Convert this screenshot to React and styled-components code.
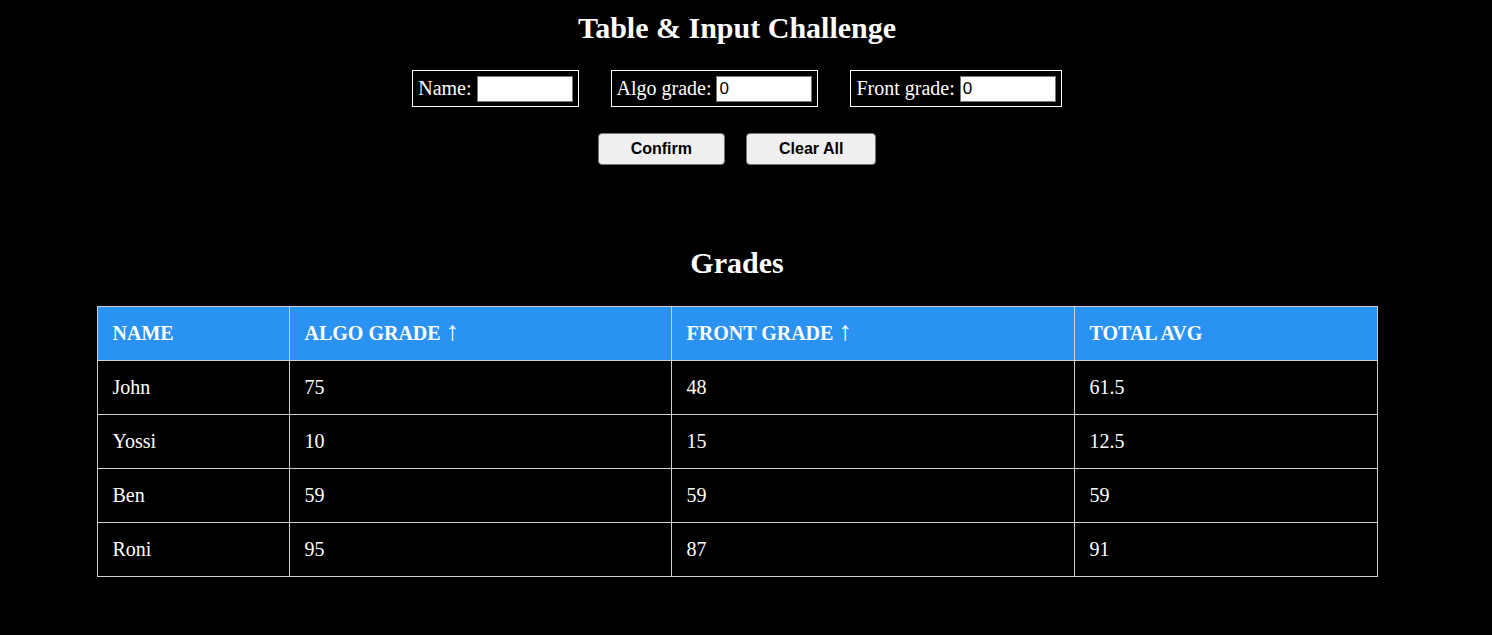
import { useState } from "react";
import styled, { createGlobalStyle } from "styled-components";

const GlobalStyle = createGlobalStyle`
    body {
        margin: 0;
        background: #000;
        color: #fff;
        font-family: "Liberation Serif", "Times New Roman", serif;
        font-size: 20px;
    }
`;

const Page = styled.main`
    display: flex;
    flex-direction: column;
    align-items: center;
    width: 1458px;
    padding: 11px 0 40px 8px;
`;

const Title = styled.h1`
    margin: 0;
    font-size: 30px;
    line-height: 34px;
    font-weight: bold;
`;

const SubTitle = styled(Title)`
    margin-top: 81px;
`;

const FormRow = styled.div`
    display: flex;
    justify-content: center;
    gap: 32px;
    margin-top: 25px;
`;

const Field = styled.label`
    display: flex;
    align-items: center;
    gap: 5px;
    height: 37px;
    box-sizing: border-box;
    padding: 0 5px;
    border: 1px solid #fff;
    font-size: 20px;
    line-height: 23px;
`;

const Input = styled.input`
    box-sizing: border-box;
    width: 96px;
    height: 26px;
    padding: 1px 2px;
    border: 1px solid #767676;
    background: #fff;
    color: #000;
    font-family: "Liberation Sans", Arial, sans-serif;
    font-size: 17px;
    outline: none;
`;

const ButtonRow = styled.div`
    display: flex;
    gap: 21px;
    margin-top: 26px;
`;

const Button = styled.button`
    height: 32px;
    padding: 0 32px;
    border: 1px solid #767676;
    border-radius: 4px;
    background: #efefef;
    color: #000;
    font-family: "Liberation Sans", Arial, sans-serif;
    font-size: 16px;
    font-weight: bold;
    cursor: pointer;
`;

const Table = styled.table`
    width: 1280px;
    margin-top: 26px;
    border-collapse: collapse;
    table-layout: fixed;
`;

const HeadCell = styled.th`
    padding: 15px;
    border: 1px solid #cfcfcf;
    background: #2a92f2;
    color: #fff;
    text-align: left;
    font-weight: bold;
    line-height: 23px;
    cursor: ${(p) => (p.sortable ? "pointer" : "default")};
`;

const SortArrow = styled.span`
    font-family: "Liberation Serif", "Times New Roman", serif;
    font-weight: normal;
    font-size: 27px;
    line-height: 0;
`;

const Cell = styled.td`
    padding: 15px;
    border: 1px solid #cfcfcf;
    text-align: left;
    line-height: 23px;
`;

const initialStudents = [
    { name: "John", algo: 75, front: 48 },
    { name: "Yossi", algo: 10, front: 15 },
    { name: "Ben", algo: 59, front: 59 },
    { name: "Roni", algo: 95, front: 87 },
];

export default function App() {
    const [students, setStudents] = useState(initialStudents);
    const [name, setName] = useState("");
    const [algo, setAlgo] = useState(0);
    const [front, setFront] = useState(0);

    const handleConfirm = () => {
        if (!name) return;
        setStudents([...students, { name, algo: Number(algo), front: Number(front) }]);
        setName("");
        setAlgo(0);
        setFront(0);
    };

    const handleClear = () => {
        setStudents([]);
    };

    return (
        <>
            <GlobalStyle />
            <Page>
                <Title>Table &amp; Input Challenge</Title>
                <FormRow>
                    <Field>
                        Name:
                        <Input value={name} onChange={(e) => setName(e.target.value)} />
                    </Field>
                    <Field>
                        Algo grade:
                        <Input type="text" value={algo} onChange={(e) => setAlgo(e.target.value)} />
                    </Field>
                    <Field>
                        Front grade:
                        <Input type="text" value={front} onChange={(e) => setFront(e.target.value)} />
                    </Field>
                </FormRow>
                <ButtonRow>
                    <Button onClick={handleConfirm}>Confirm</Button>
                    <Button onClick={handleClear}>Clear All</Button>
                </ButtonRow>

                <SubTitle as="h2">Grades</SubTitle>
                <Table>
                    <colgroup>
                        <col style={{ width: 192 }} />
                        <col style={{ width: 382 }} />
                        <col style={{ width: 403 }} />
                        <col style={{ width: 303 }} />
                    </colgroup>
                    <thead>
                        <tr>
                            <HeadCell>NAME</HeadCell>
                            <HeadCell sortable>ALGO GRADE <SortArrow>↑</SortArrow></HeadCell>
                            <HeadCell sortable>FRONT GRADE <SortArrow>↑</SortArrow></HeadCell>
                            <HeadCell>TOTAL AVG</HeadCell>
                        </tr>
                    </thead>
                    <tbody>
                        {students.map((s) => (
                            <tr key={s.name}>
                                <Cell>{s.name}</Cell>
                                <Cell>{s.algo}</Cell>
                                <Cell>{s.front}</Cell>
                                <Cell>{(s.algo + s.front) / 2}</Cell>
                            </tr>
                        ))}
                    </tbody>
                </Table>
            </Page>
        </>
    );
}
